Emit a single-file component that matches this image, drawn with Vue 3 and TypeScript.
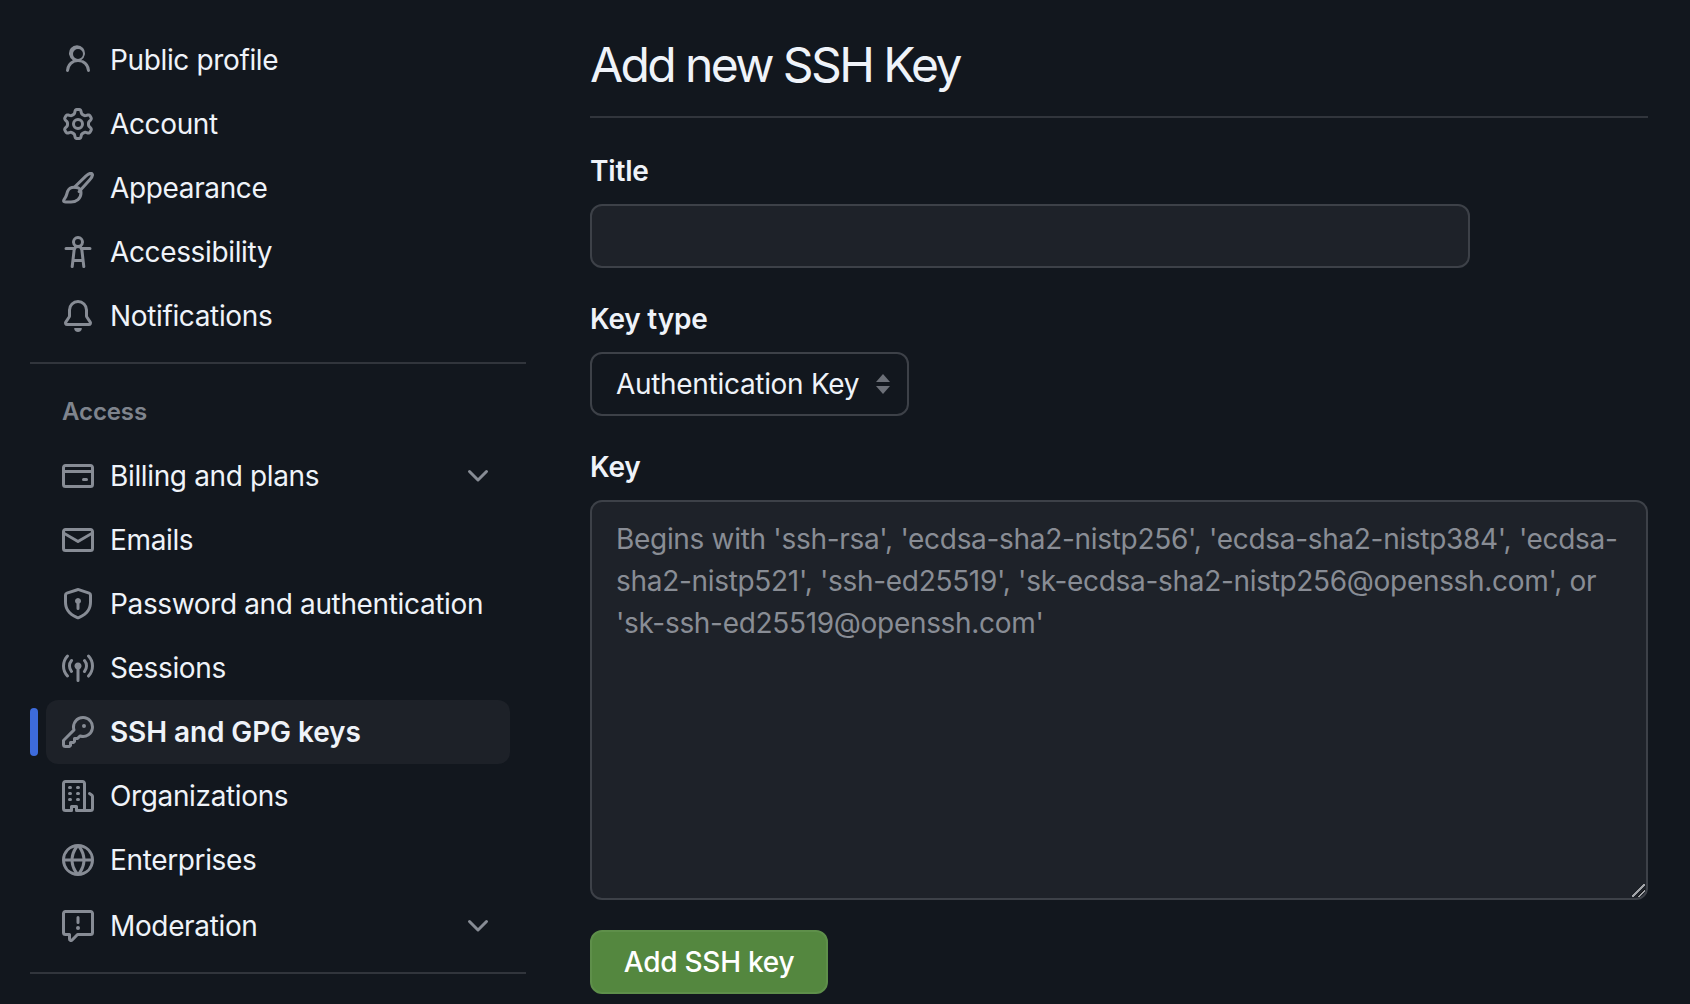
<script setup lang="ts">
interface NavItem {
  label: string
  paths: string[]
  stroke?: boolean
  chevron?: boolean
  active?: boolean
  nudge?: boolean
}

const chevron = 'M12.78 5.22a.749.749 0 0 1 0 1.06l-4.25 4.25a.749.749 0 0 1-1.06 0L3.22 6.28a.749.749 0 1 1 1.06-1.06L8 8.939l3.72-3.719a.749.749 0 0 1 1.06 0Z'

const topItems: NavItem[] = [
  { label: 'Public profile', paths: ['M10.561 8.073a6.005 6.005 0 0 1 3.432 5.142.75.75 0 1 1-1.498.07 4.5 4.5 0 0 0-8.99 0 .75.75 0 0 1-1.498-.07 6.004 6.004 0 0 1 3.431-5.142 3.999 3.999 0 1 1 4.123 0ZM10.5 5a2.5 2.5 0 1 0-5 0 2.5 2.5 0 0 0 5 0Z'] },
  { label: 'Account', paths: ['M8 0a8.2 8.2 0 0 1 .701.031C9.444.095 9.99.645 10.16 1.29l.288 1.107c.018.066.079.158.212.224.231.114.454.243.668.386.123.082.233.09.299.071l1.103-.303c.644-.176 1.392.021 1.82.63.27.385.506.792.704 1.218.315.675.111 1.422-.364 1.891l-.814.806c-.049.048-.098.147-.088.294.016.257.016.515 0 .772-.01.147.038.246.088.294l.814.806c.475.469.679 1.216.364 1.891a7.977 7.977 0 0 1-.704 1.217c-.428.61-1.176.807-1.82.63l-1.102-.302c-.067-.019-.177-.011-.3.071a5.909 5.909 0 0 1-.668.386c-.133.066-.194.158-.211.224l-.29 1.106c-.168.646-.715 1.196-1.458 1.26a8.006 8.006 0 0 1-1.402 0c-.743-.064-1.289-.614-1.458-1.26l-.289-1.106c-.018-.066-.079-.158-.212-.224a5.738 5.738 0 0 1-.668-.386c-.123-.082-.233-.09-.299-.071l-1.103.303c-.644.176-1.392-.021-1.82-.63a8.12 8.12 0 0 1-.704-1.218c-.315-.675-.111-1.422.363-1.891l.815-.806c.05-.048.098-.147.088-.294a6.214 6.214 0 0 1 0-.772c.01-.147-.038-.246-.088-.294l-.815-.806C.635 6.045.431 5.298.746 4.623a7.92 7.92 0 0 1 .704-1.217c.428-.61 1.176-.807 1.82-.63l1.102.302c.067.019.177.011.3-.071.214-.143.437-.272.668-.386.133-.066.194-.158.211-.224l.29-1.106C6.009.645 6.556.095 7.299.03 7.53.01 7.764 0 8 0Zm-.571 1.525c-.036.003-.108.036-.137.146l-.289 1.105c-.147.561-.549.967-.998 1.189-.173.086-.34.183-.5.29-.417.278-.97.423-1.529.27l-1.103-.303c-.109-.03-.175.016-.195.045-.22.312-.412.644-.573.99-.014.031-.021.11.059.19l.815.806c.411.406.562.957.53 1.456a4.709 4.709 0 0 0 0 .582c.032.499-.119 1.05-.53 1.456l-.815.806c-.081.08-.073.159-.059.19.162.346.353.677.573.989.02.03.085.076.195.046l1.102-.303c.56-.153 1.113-.008 1.53.27.161.107.328.204.501.29.447.222.85.629.997 1.189l.289 1.105c.029.109.101.143.137.146a6.6 6.6 0 0 0 1.142 0c.036-.003.108-.036.137-.146l.289-1.105c.147-.561.549-.967.998-1.189.173-.086.34-.183.5-.29.417-.278.97-.423 1.529-.27l1.103.303c.109.029.175-.016.195-.045.22-.313.411-.644.573-.99.014-.031.021-.11-.059-.19l-.815-.806c-.411-.406-.562-.957-.53-1.456a4.709 4.709 0 0 0 0-.582c-.032-.499.119-1.05.53-1.456l.815-.806c.081-.08.073-.159.059-.19a6.464 6.464 0 0 0-.573-.989c-.02-.03-.085-.076-.195-.046l-1.102.303c-.56.153-1.113.008-1.53-.27a4.44 4.44 0 0 0-.501-.29c-.447-.222-.85-.629-.997-1.189l-.289-1.105c-.029-.11-.101-.143-.137-.146a6.6 6.6 0 0 0-1.142 0ZM11 8a3 3 0 1 1-6 0 3 3 0 0 1 6 0ZM9.5 8a1.5 1.5 0 1 0-3.001.001A1.5 1.5 0 0 0 9.5 8Z'] },
  { label: 'Appearance', stroke: true, paths: ['M6.3 7.5 11.9 2.1C13 1.1 14.5.4 15 .9c.5.5-.2 2-1.2 3.1L8.6 9.8', 'M6.1 7.6c-1.5 0-2.8.8-3.3 2.1-.4 1.1-.5 2.1-1.2 3.2-.3.5-.8 1-.8 1.5 0 .4.4.6 1.1.6h2.6c2.7 0 5-1.7 5-4.6 0-.6-.1-1.1-.3-1.5-.5-.9-1.5-1.3-3.1-1.3Z'] },
  { label: 'Accessibility', paths: ['M9.923 5.302c.063.063.122.129.178.198H14A.75.75 0 0 1 14 7h-3.3l.578 5.163.362 2.997a.75.75 0 0 1-1.49.18L9.868 13H6.132l-.282 2.34a.75.75 0 0 1-1.49-.18l.362-2.997L5.3 7H2a.75.75 0 0 1 0-1.5h3.9a2.54 2.54 0 0 1 .176-.198 3 3 0 1 1 3.847 0ZM9.2 7.073h-.001a1.206 1.206 0 0 0-2.398 0L6.305 11.5h3.39ZM9.5 3a1.5 1.5 0 1 0-3.001.001A1.5 1.5 0 0 0 9.5 3Z'] },
  { label: 'Notifications', paths: ['M8 16c.9 0 1.7-.6 1.9-1.5.1-.3-.1-.5-.4-.5h-3c-.3 0-.5.2-.4.5.2.9 1 1.5 1.9 1.5ZM3 5a5 5 0 0 1 10 0v2.947c0 .05.015.098.042.139l1.703 2.555A1.519 1.519 0 0 1 13.482 13H2.518a1.516 1.516 0 0 1-1.263-2.36l1.703-2.554A.255.255 0 0 0 3 7.947Zm5-3.5A3.5 3.5 0 0 0 4.5 5v2.947c0 .346-.102.683-.294.97l-1.703 2.556a.017.017 0 0 0-.003.01l.001.006c0 .002.002.004.004.006l.006.004.007.001h10.964l.007-.001.006-.004.004-.006.001-.007a.017.017 0 0 0-.003-.01l-1.703-2.554a1.745 1.745 0 0 1-.294-.97V5A3.5 3.5 0 0 0 8 1.5Z'] },
]

const accessItems: NavItem[] = [
  { label: 'Billing and plans', chevron: true, paths: ['M10.75 9a.75.75 0 0 0 0 1.5h1.5a.75.75 0 0 0 0-1.5h-1.5Z', 'M0 3.75C0 2.784.784 2 1.75 2h12.5c.966 0 1.75.784 1.75 1.75v8.5A1.75 1.75 0 0 1 14.25 14H1.75A1.75 1.75 0 0 1 0 12.25ZM14.5 6.5h-13v5.75c0 .138.112.25.25.25h12.5a.25.25 0 0 0 .25-.25Zm0-2.75a.25.25 0 0 0-.25-.25H1.75a.25.25 0 0 0-.25.25V5h13Z'] },
  { label: 'Emails', paths: ['M1.75 2h12.5c.966 0 1.75.784 1.75 1.75v8.5A1.75 1.75 0 0 1 14.25 14H1.75A1.75 1.75 0 0 1 0 12.25v-8.5C0 2.784.784 2 1.75 2ZM1.5 12.251c0 .138.112.25.25.25h12.5a.25.25 0 0 0 .25-.25V5.809L8.38 9.397a.75.75 0 0 1-.76 0L1.5 5.809v6.442Zm13-8.181v-.32a.25.25 0 0 0-.25-.25H1.75a.25.25 0 0 0-.25.25v.32L8 7.88Z'] },
  { label: 'Password and authentication', paths: ['m8.533.133 5.25 1.68A1.75 1.75 0 0 1 15 3.48V7c0 1.566-.32 3.182-1.303 4.682-.983 1.498-2.585 2.813-5.032 3.855a1.697 1.697 0 0 1-1.33 0c-2.447-1.042-4.049-2.357-5.032-3.855C1.32 10.182 1 8.566 1 7V3.48a1.75 1.75 0 0 1 1.217-1.667l5.25-1.68a1.748 1.748 0 0 1 1.066 0Zm-.61 1.429.001.001-5.25 1.68a.251.251 0 0 0-.174.237V7c0 1.36.275 2.666 1.057 3.859.784 1.194 2.121 2.342 4.366 3.298a.196.196 0 0 0 .154 0c2.245-.957 3.582-2.103 4.366-3.297C13.225 9.666 13.5 8.358 13.5 7V3.48a.25.25 0 0 0-.174-.238l-5.25-1.68a.25.25 0 0 0-.153 0ZM9.5 6.5c0 .536-.286 1.032-.75 1.3v2.45a.75.75 0 0 1-1.5 0V7.8A1.5 1.5 0 1 1 9.5 6.5Z'] },
  { label: 'Sessions', paths: ['M8.75 8.582v5.668a.75.75 0 0 1-1.5 0V8.582a1.75 1.75 0 1 1 1.5 0Zm3.983-7.125a.75.75 0 0 1 1.06.026A7.976 7.976 0 0 1 16 7c0 2.139-.84 4.083-2.207 5.517a.75.75 0 1 1-1.086-1.034A6.474 6.474 0 0 0 14.5 7a6.474 6.474 0 0 0-1.793-4.483.75.75 0 0 1 .026-1.06Zm-9.466 0c.3.286.312.76.026 1.06A6.474 6.474 0 0 0 1.5 7a6.47 6.47 0 0 0 1.793 4.483.75.75 0 0 1-1.086 1.034A7.973 7.973 0 0 1 0 7c0-2.139.84-4.083 2.207-5.517a.75.75 0 0 1 1.06-.026Zm8.556 2.321A4.988 4.988 0 0 1 13 7a4.988 4.988 0 0 1-1.177 3.222.75.75 0 1 1-1.146-.967A3.487 3.487 0 0 0 11.5 7c0-.86-.309-1.645-.823-2.255a.75.75 0 0 1 1.146-.967Zm-6.492.958A3.48 3.48 0 0 0 4.5 7a3.48 3.48 0 0 0 .823 2.255.75.75 0 0 1-1.146.967A4.981 4.981 0 0 1 3 7a4.982 4.982 0 0 1 1.188-3.236.75.75 0 1 1 1.143.972Z'] },
  { label: 'SSH and GPG keys', active: true, paths: ['M10.5 0a5.499 5.499 0 1 1-1.288 10.848l-.932.932a.749.749 0 0 1-.53.22H7v.75a.749.749 0 0 1-.22.53l-.5.5a.749.749 0 0 1-.53.22H5v.75a.749.749 0 0 1-.22.53l-.5.5a.749.749 0 0 1-.53.22h-2A1.75 1.75 0 0 1 0 14.25v-2c0-.199.079-.39.22-.53l4.932-4.932A5.5 5.5 0 0 1 10.5 0Zm-4 5.5c-.001.431.069.86.205 1.269a.75.75 0 0 1-.181.768L1.5 12.56v1.69c0 .138.112.25.25.25h1.69l.06-.06v-1.19a.75.75 0 0 1 .75-.75h1.19l.06-.06v-1.19a.75.75 0 0 1 .75-.75h1.19l1.023-1.025a.75.75 0 0 1 .768-.18A4 4 0 1 0 6.5 5.5ZM11 6a1 1 0 1 1 0-2 1 1 0 0 1 0 2Z'] },
  { label: 'Organizations', paths: ['M1.75 16A1.75 1.75 0 0 1 0 14.25V1.75C0 .784.784 0 1.75 0h8.5C11.216 0 12 .784 12 1.75v12.5c0 .085-.006.168-.018.25h2.268a.25.25 0 0 0 .25-.25V8.285a.25.25 0 0 0-.111-.208l-1.055-.703a.749.749 0 1 1 .832-1.248l1.055.703c.487.325.779.871.779 1.456v5.965A1.75 1.75 0 0 1 14.25 16h-3.5a.766.766 0 0 1-.197-.026c-.099.017-.2.026-.303.026h-3a.75.75 0 0 1-.75-.75V14h-1v1.25a.75.75 0 0 1-.75.75Zm-.25-1.75c0 .138.112.25.25.25H4v-1.25a.75.75 0 0 1 .75-.75h2.5a.75.75 0 0 1 .75.75v1.25h2.25a.25.25 0 0 0 .25-.25V1.75a.25.25 0 0 0-.25-.25h-8.5a.25.25 0 0 0-.25.25ZM3.75 6h.5a.75.75 0 0 1 0 1.5h-.5a.75.75 0 0 1 0-1.5ZM3 3.75A.75.75 0 0 1 3.75 3h.5a.75.75 0 0 1 0 1.5h-.5A.75.75 0 0 1 3 3.75Zm4 3A.75.75 0 0 1 7.75 6h.5a.75.75 0 0 1 0 1.5h-.5A.75.75 0 0 1 7 6.75ZM7.75 3h.5a.75.75 0 0 1 0 1.5h-.5a.75.75 0 0 1 0-1.5ZM3 9.75A.75.75 0 0 1 3.75 9h.5a.75.75 0 0 1 0 1.5h-.5A.75.75 0 0 1 3 9.75ZM7.75 9h.5a.75.75 0 0 1 0 1.5h-.5a.75.75 0 0 1 0-1.5Z'] },
  { label: 'Enterprises', paths: ['M8 0a8 8 0 1 1 0 16A8 8 0 0 1 8 0ZM5.78 8.75a9.64 9.64 0 0 0 1.363 4.177c.255.426.542.832.857 1.215.245-.296.551-.705.857-1.215A9.64 9.64 0 0 0 10.22 8.75Zm4.44-1.5a9.64 9.64 0 0 0-1.363-4.177c-.307-.51-.612-.919-.857-1.215a9.927 9.927 0 0 0-.857 1.215A9.64 9.64 0 0 0 5.78 7.25Zm-5.944 1.5H1.543a6.507 6.507 0 0 0 4.666 5.5c-.123-.181-.24-.365-.352-.552-.715-1.192-1.437-2.874-1.581-4.948Zm-2.733-1.5h2.733c.144-2.074.866-3.756 1.58-4.948.12-.197.237-.381.353-.552a6.507 6.507 0 0 0-4.666 5.5Zm10.181 1.5c-.144 2.074-.866 3.756-1.58 4.948-.12.197-.237.381-.353.552a6.507 6.507 0 0 0 4.666-5.5Zm2.733-1.5a6.507 6.507 0 0 0-4.666-5.5c.123.181.24.365.353.552.714 1.192 1.436 2.874 1.58 4.948Z'] },
  { label: 'Moderation', chevron: true, nudge: true, paths: ['M0 1.75C0 .784.784 0 1.75 0h12.5C15.216 0 16 .784 16 1.75v9.5A1.75 1.75 0 0 1 14.25 13H8.06l-2.573 2.573A1.458 1.458 0 0 1 3 14.543V13H1.75A1.75 1.75 0 0 1 0 11.25Zm1.75-.25a.25.25 0 0 0-.25.25v9.5c0 .138.112.25.25.25h2a.75.75 0 0 1 .75.75v2.19l2.72-2.72a.749.749 0 0 1 .53-.22h6.5a.25.25 0 0 0 .25-.25v-9.5a.25.25 0 0 0-.25-.25Zm7 2.25v2.5a.75.75 0 0 1-1.5 0v-2.5a.75.75 0 0 1 1.5 0ZM9 9a1 1 0 1 1-2 0 1 1 0 0 1 2 0Z'] },
]

const groups: { heading?: string; items: NavItem[] }[] = [
  { items: topItems },
  { heading: 'Access', items: accessItems },
]

const placeholder =
  "Begins with 'ssh-rsa', 'ecdsa-sha2-nistp256', 'ecdsa-sha2-nistp384', 'ecdsa-sha2-nistp521', 'ssh-ed25519', 'sk-ecdsa-sha2-nistp256@openssh.com', or 'sk-ssh-ed25519@openssh.com'"
</script>

<template>
  <div class="page">
    <aside class="sidebar">
      <section v-for="(group, g) in groups" :key="g" class="group">
        <h2 v-if="group.heading" class="group-heading">{{ group.heading }}</h2>
        <ul class="nav">
          <li
            v-for="item in group.items"
            :key="item.label"
            class="nav-item"
            :class="{ active: item.active, nudge: item.nudge }"
          >
            <svg class="icon" viewBox="0 0 16 16" aria-hidden="true">
              <path
                v-for="(d, i) in item.paths"
                :key="i"
                :d="d"
                :class="item.stroke ? 'line' : 'fill'"
              />
            </svg>
            <span class="nav-label">{{ item.label }}</span>
            <svg v-if="item.chevron" class="icon chevron" viewBox="0 0 16 16" aria-hidden="true">
              <path :d="chevron" class="fill" />
            </svg>
          </li>
        </ul>
      </section>
    </aside>

    <main class="content">
      <h1 class="title">Add new SSH Key</h1>
      <form class="form" @submit.prevent>
        <div class="field">
          <label class="label" for="ssh-title">Title</label>
          <input id="ssh-title" class="control title-input" type="text" />
        </div>
        <div class="field">
          <label class="label" for="ssh-type">Key type</label>
          <div class="select-wrap">
            <select id="ssh-type" class="select">
              <option>Authentication Key</option>
              <option>Signing Key</option>
            </select>
            <svg class="select-arrows" viewBox="0 0 14 20" aria-hidden="true">
              <path d="M7 0 14 8H0Z M0 12H14L7 20Z" />
            </svg>
          </div>
        </div>
        <div class="field">
          <label class="label" for="ssh-key">Key</label>
          <textarea id="ssh-key" class="control key-input" :placeholder="placeholder"></textarea>
        </div>
        <button class="submit" type="submit">Add SSH key</button>
      </form>
    </main>
  </div>
</template>

<style>
html,
body {
  margin: 0;
  background: #12171e;
  overflow: hidden;
}
</style>

<style scoped>
.page {
  display: flex;
  gap: 64px;
  box-sizing: border-box;
  width: 1690px;
  height: 1004px;
  padding: 28px 42px 0 30px;
  background: #12171e;
  color: #eff3f9;
  font-family: Inter, "Liberation Sans", sans-serif;
  font-size: 28px;
}

.sidebar {
  flex: 0 0 496px;
  display: flex;
  flex-direction: column;
}

.group {
  padding-bottom: 14px;
  border-bottom: 2px solid #31353c;
}

.group-heading {
  margin: 0;
  padding: 34px 0 0 32px;
  height: 46px;
  font-size: 24px;
  line-height: 28px;
  font-weight: 600;
  letter-spacing: -0.1px;
  color: #7f848d;
}

.nav {
  list-style: none;
  margin: 0;
  padding: 0 16px;
}

.nav-item {
  position: relative;
  display: flex;
  align-items: center;
  gap: 16px;
  height: 64px;
  padding: 0 16px;
  border-radius: 12px;
  line-height: 40px;
  letter-spacing: -0.36px;
}

.nav-item.nudge {
  margin-top: 2px;
}

.nav-item.active {
  background: #1d2128;
  font-weight: 600;
  letter-spacing: -0.1px;
}

.nav-item.active::before {
  content: "";
  position: absolute;
  left: -16px;
  top: 8px;
  width: 8px;
  height: 48px;
  border-radius: 4px;
  background: #3d6bdc;
}

.icon {
  flex: 0 0 32px;
  width: 32px;
  height: 32px;
}

.fill {
  fill: #878c95;
}

.line {
  fill: none;
  stroke: #878c95;
  stroke-width: 1.5;
  stroke-linecap: round;
  stroke-linejoin: round;
}

.nav-label {
  flex: 1;
}

.content {
  flex: 1;
  min-width: 0;
}

.title {
  margin: 0;
  height: 73px;
  padding: 0 0 15px;
  border-bottom: 2px solid #31353c;
  font-size: 48px;
  line-height: 74px;
  font-weight: 400;
  letter-spacing: -2.6px;
}

.form {
  display: flex;
  flex-direction: column;
  align-items: flex-start;
  padding-top: 34px;
}

.field {
  display: flex;
  flex-direction: column;
  align-items: flex-start;
  width: 100%;
  margin-bottom: 32px;
}

.field:nth-child(3) {
  margin-bottom: 30px;
}

.label {
  margin-bottom: 14px;
  line-height: 38px;
  font-weight: 600;
  letter-spacing: -0.2px;
}

.control {
  display: block;
  box-sizing: border-box;
  border: 2px solid #3d4148;
  border-radius: 12px;
  background: #1e2229;
  color: #eff3f9;
  font: inherit;
  letter-spacing: -0.31px;
  outline: none;
}

.title-input {
  width: 880px;
  height: 64px;
  padding: 0 24px;
}

.select-wrap {
  position: relative;
  width: 319px;
  height: 64px;
}

.select {
  appearance: none;
  display: block;
  box-sizing: border-box;
  width: 100%;
  height: 100%;
  padding: 0 40px 0 24px;
  border: 2px solid #3d4148;
  border-radius: 12px;
  background: transparent;
  color: #eff3f9;
  font: inherit;
  letter-spacing: -0.31px;
  outline: none;
}

.select option {
  background: #1e2229;
}

.select-arrows {
  position: absolute;
  right: 19px;
  top: 22px;
  width: 14px;
  height: 20px;
  fill: #6c7078;
  pointer-events: none;
}

.key-input {
  width: 100%;
  height: 400px;
  padding: 16px 24px;
  line-height: 42px;
  resize: both;
}

.key-input::placeholder {
  color: #898d95;
  opacity: 1;
}

.key-input::-webkit-resizer {
  background: linear-gradient(
      135deg,
      transparent 0 43%,
      #111 43% 46%,
      #a2a4a8 46% 54%,
      transparent 54% 68%,
      #111 68% 71%,
      #a2a4a8 71% 79%,
      transparent 79%
    )
    right 1px bottom 1px / 13px 13px no-repeat;
}

.submit {
  box-sizing: border-box;
  width: 238px;
  height: 64px;
  padding: 0;
  border: 2px solid #5e8f4a;
  border-radius: 12px;
  background: #54873f;
  color: #fff;
  font: inherit;
  font-weight: 500;
  letter-spacing: -0.25px;
  cursor: pointer;
}
</style>
